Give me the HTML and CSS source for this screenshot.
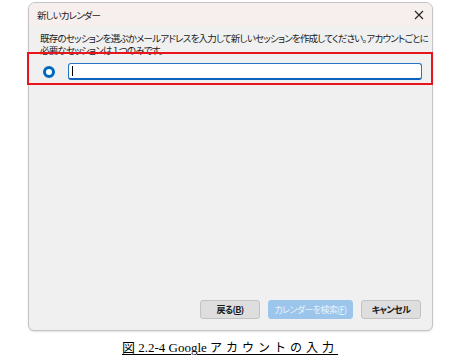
FILE: index.html
```html
<!DOCTYPE html>
<html lang="ja">
<head>
  <meta charset="UTF-8">
  <title>新しいカレンダー</title>
  <link rel="stylesheet" href="styles.css">
</head>
<body>
  <!-- ダイアログ本体 -->
  <div class="dialog">
    <div class="titlebar">
      <span class="title">新しいカレンダー</span>
      <svg class="close" width="10" height="10" viewBox="0 0 10 10">
        <path d="M1 1 L9 9 M9 1 L1 9" stroke="#222" stroke-width="1.1" fill="none"/>
      </svg>
    </div>

    <div class="content">
      <p class="message">既存のセッションを選ぶかメールアドレスを入力して新しいセッションを作成してください。アカウントごとに<br>必要なセッションは 1 つのみです。</p>

      <div class="row">
        <span class="radio"></span>
        <div class="textbox"><span class="caret"></span></div>
      </div>
    </div>

    <div class="footer">
      <button class="btn btn-back">戻る(<u>B</u>)</button>
      <button class="btn btn-search" disabled>カレンダーを検索(<u>F</u>)</button>
      <button class="btn btn-cancel">キャンセル</button>
    </div>

    <!-- 注釈の赤枠 -->
    <div class="highlight"></div>
  </div>

  <p class="caption">図 2.2-4 Google <span class="jp">アカウントの入力</span></p>
</body>
</html>
```

FILE: styles.css
```css
body {
  margin: 0;
  padding-top: 2px;
  background-color: #ffffff;
  font-family: "Noto Sans CJK JP", "Noto Sans", sans-serif;
}

.dialog {
  position: relative;
  box-sizing: border-box;
  width: 405px;
  height: 329px;
  margin-left: 28px;
  border: 1px solid #c4c4c4;
  border-radius: 7px 7px 6px 6px;
  background-color: #f0f0f0;
  box-shadow: 0 1px 2px rgba(0,0,0,0.12);
  display: flex;
  flex-direction: column;
}

.titlebar {
  height: 23px;
  background-color: #f6efed;
  border-radius: 6px 6px 0 0;
  display: flex;
  align-items: center;
  justify-content: space-between;
  padding: 0 8px 0 8px;
}

.title {
  font-size: 9.5px;
  color: #1a1a1a;
  font-feature-settings: "palt";
  letter-spacing: -0.9px;
}

.content {
  flex: 1;
  padding: 6px 10px 0 11px;
}

.message {
  margin: 0;
  font-size: 9.5px;
  line-height: 12px;
  color: #1a1a1a;
  font-feature-settings: "palt";
  letter-spacing: -0.78px;
  white-space: nowrap;
}

.row {
  display: flex;
  align-items: center;
  margin-top: 7px;
  gap: 13px;
}

.radio {
  box-sizing: border-box;
  width: 12px;
  height: 12px;
  margin-left: 3px;
  border-radius: 50%;
  border: 3.5px solid #0067c0;
  background-color: #ffffff;
}

.textbox {
  box-sizing: border-box;
  flex: 1;
  height: 17px;
  border: 1px solid #2a74c6;
  border-bottom: 2px solid #0f62be;
  border-radius: 3px;
  background-color: #ffffff;
  display: flex;
  align-items: center;
  padding-left: 3px;
}

.caret {
  width: 1px;
  height: 10px;
  background-color: #000;
}

.footer {
  display: flex;
  justify-content: flex-end;
  gap: 8px;
  padding: 0 11px 11px 0;
}

.btn {
  box-sizing: border-box;
  height: 19px;
  padding: 0;
  border: 1px solid #c2c2c2;
  border-radius: 3px;
  background-color: #dedede;
  font-family: "Noto Sans CJK JP", sans-serif;
  font-size: 9px;
  font-weight: bold;
  color: #1a1a1a;
  font-feature-settings: "palt";
  letter-spacing: -0.6px;
  white-space: nowrap;
}

.btn u {
  text-underline-offset: 1px;
}

.btn-back, .btn-cancel {
  width: 60px;
}

.btn-search {
  width: 85px;
  background-color: #9bc5eb;
  border-color: #9bc5eb;
  color: #eaf3fb;
  font-weight: normal;
}

/* 赤い注釈枠 */
.highlight {
  position: absolute;
  left: -2px;
  top: 49px;
  width: 406px;
  height: 33px;
  box-sizing: border-box;
  border: 2px solid #e8141b;
}

.caption {
  margin: 6px 0 0 0;
  text-align: center;
  padding-right: 2px;
  font-family: "Liberation Serif", "Noto Sans CJK JP", serif;
  font-size: 13px;
  color: #000;
  text-decoration: underline;
  text-underline-offset: 2px;
}

.caption .jp {
  font-size: 12px;
  letter-spacing: 4px;
}
```
